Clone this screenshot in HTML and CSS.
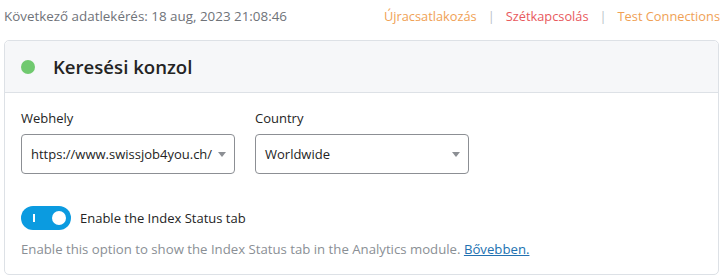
FILE: index.html
```html
<html>

<head>
	<title>Keresési konzol</title>
	<link rel="stylesheet" href="styles.css">
</head>

<body>
	<div class="page">
		<div class="topbar">
			<span class="next-fetch">Következő adatlekérés: 18 aug, 2023 21:08:46</span>
			<div class="actions">
				<a class="reconnect" href="#">Újracsatlakozás</a>
				<span class="sep">|</span>
				<a class="disconnect" href="#">Szétkapcsolás</a>
				<span class="sep">|</span>
				<a class="test" href="#">Test Connections</a>
			</div>
		</div>

		<div class="card">
			<div class="card-header">
				<span class="status-dot"></span>
				<h2>Keresési konzol</h2>
			</div>
			<div class="card-body">
				<div class="fields">
					<div class="field">
						<label>Webhely</label>
						<div class="select">
							<span>https://www.swissjob4you.ch/</span>
							<span class="caret"></span>
						</div>
					</div>
					<div class="field">
						<label>Country</label>
						<div class="select">
							<span>Worldwide</span>
							<span class="caret"></span>
						</div>
					</div>
				</div>

				<div class="toggle-row">
					<span class="toggle"><span class="bar"></span><span class="knob"></span></span>
					<span>Enable the Index Status tab</span>
				</div>
				<p class="help">Enable this option to show the Index Status tab in the Analytics module. <a href="#">Bővebben.</a></p>
			</div>
		</div>
	</div>
</body>

</html>
```

FILE: styles.css
```css
* {
	box-sizing: border-box;
	margin: 0;
	padding: 0;
}

body {
	font-family: "Open Sans", "Noto Sans", sans-serif;
	font-size: 13px;
	color: #242424;
	background: white;
}

.page {
	width: 716px;
	margin-left: 4px;
}

.topbar {
	display: flex;
	justify-content: space-between;
	align-items: center;
	height: 31px;
}

.next-fetch {
	color: #6f7379;
	font-size: 13.4px;
}

.actions {
	display: flex;
	gap: 11px;
	font-size: 12.8px;
}

.actions a {
	text-decoration: none;
}

.reconnect,
.test {
	color: #f0a155;
}

.disconnect {
	color: #e8595d;
}

.sep {
	color: #b8c0c8;
}

.card {
	margin-top: 9px;
	width: 715px;
	border: 1px solid #dde1e6;
	border-radius: 5px;
	height: 235px;
}

.card-header {
	display: flex;
	align-items: center;
	gap: 18px;
	height: 52px;
	padding-left: 16px;
	background: #f6f7f9;
	border-bottom: 1px solid #dde1e6;
	border-radius: 5px 5px 0 0;
}

.status-dot {
	width: 14px;
	height: 14px;
	border-radius: 50%;
	background: #70c96f;
}

.card-header h2 {
	font-size: 18.6px;
	font-weight: 600;
	color: #242424;
}

.card-body {
	padding: 16px 16px 0 16px;
}

.fields {
	display: flex;
	gap: 20px;
}

.field {
	display: flex;
	flex-direction: column;
	gap: 7px;
}

.field label {
	font-size: 13px;
	color: #242424;
}

.select {
	display: flex;
	align-items: center;
	justify-content: space-between;
	width: 214px;
	height: 40px;
	padding: 0 8px 0 9px;
	border: 1px solid #8c8f94;
	border-radius: 4px;
	background: white;
}

.caret {
	width: 0;
	height: 0;
	border-left: 4px solid transparent;
	border-right: 4px solid transparent;
	border-top: 5px solid #8c8f94;
}

.toggle-row {
	display: flex;
	align-items: center;
	gap: 9px;
	margin-top: 32px;
}

.toggle {
	display: flex;
	align-items: center;
	justify-content: space-between;
	width: 50px;
	height: 24px;
	padding: 0 5px 0 12px;
	border-radius: 12px;
	background: #0b9be0;
}

.toggle .bar {
	width: 2px;
	height: 8px;
	background: white;
}

.toggle .knob {
	width: 14px;
	height: 14px;
	border-radius: 50%;
	background: white;
}

.help {
	margin-top: 10px;
	color: #8a8f95;
	font-size: 13.2px;
}

.help a {
	color: #2271b1;
}
```
